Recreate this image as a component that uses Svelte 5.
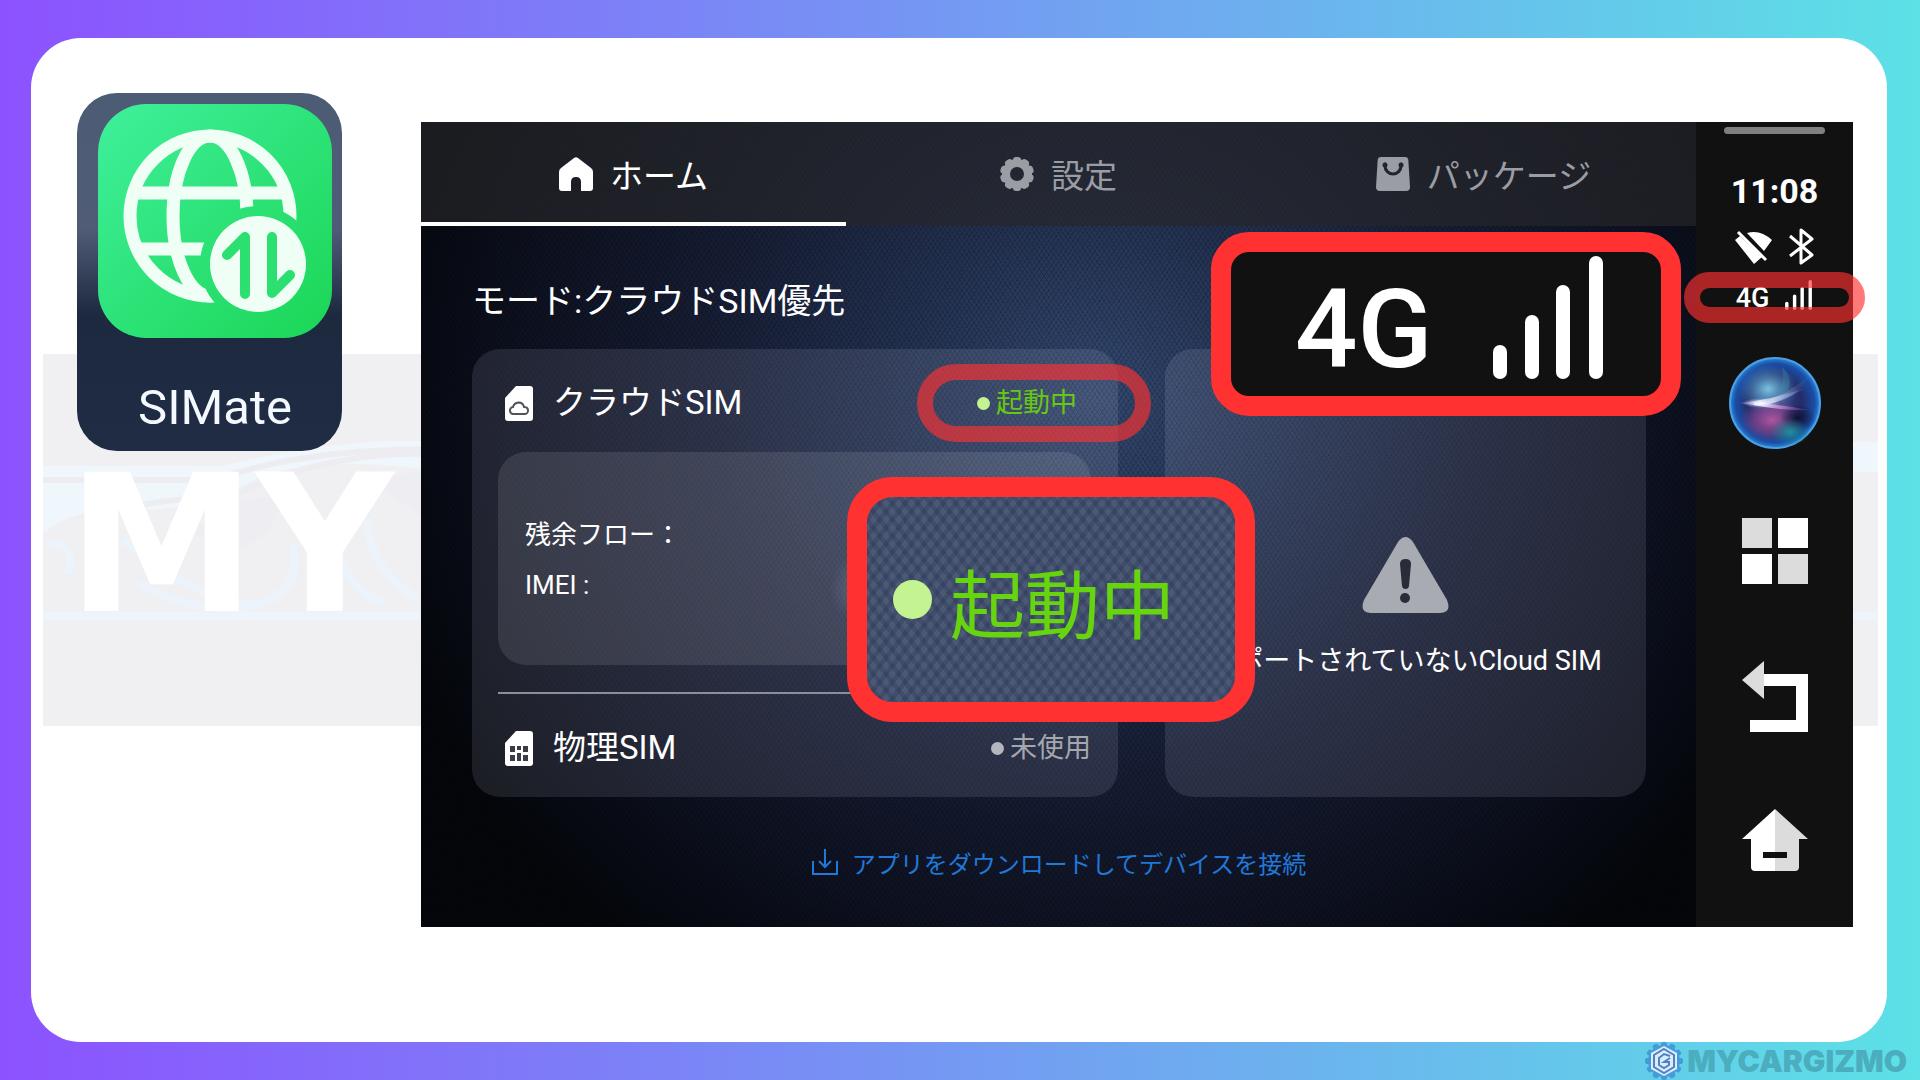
<script lang="ts">
  type Tab = 'home' | 'settings' | 'packages';

  const tabs: { id: Tab; label: string }[] = [
    { id: 'home', label: 'ホーム' },
    { id: 'settings', label: '設定' },
    { id: 'packages', label: 'パッケージ' }
  ];

  const teeth = Array.from({ length: 12 }, (_, i) => i * 30);
  const cogTeeth = Array.from({ length: 10 }, (_, i) => i * 36);

  let active = $state<Tab>('home');
</script>

{#snippet signal()}
  <svg class="signal" viewBox="0 0 112 123" fill="#fff" aria-hidden="true">
    <rect x="1" y="89" width="14" height="34" rx="7" />
    <rect x="33" y="59" width="14" height="64" rx="7" />
    <rect x="64" y="29" width="14" height="94" rx="7" />
    <rect x="97" y="0" width="14" height="123" rx="7" />
  </svg>
{/snippet}

<div class="page">
  <main class="card">
    <div class="watermark" aria-hidden="true">
      <svg viewBox="0 0 1835 372" preserveAspectRatio="none" fill="none">
        <path d="M0 112h180q120-30 220-24h1435v30H400Q260 96 200 132q-60 30-130 22Q20 160 0 180z" fill="#eff7fc" />
        <path d="M0 126h170q100-34 240-30M60 160q90-24 140-10M195 140q90-44 200-40" stroke="#ededf1" stroke-width="6" />
        <path d="M80 185q70 60 130 66q50-10 40-60M95 230q60 30 110 24M300 160q-20 60 40 90M325 165q0 50 50 80M5 190q30 0 20 30" stroke="#edf3fb" stroke-width="8" />
        <path d="M150 180q40-46 90-34q-10 40-50 50zM330 130q30-16 60-10v50z" fill="#eeeef2" />
        <path d="M0 262h1835" stroke="#eef4fb" stroke-width="8" />
      </svg>
      <span class="watermark-text">MY</span>
    </div>

    <button class="app-tile" type="button">
      <svg class="app-icon" viewBox="0 0 234 234" fill="none" aria-hidden="true">
        <defs>
          <linearGradient id="app-green" x1="0" y1="0" x2="1" y2="1">
            <stop offset="0" stop-color="#3ff09c" />
            <stop offset="1" stop-color="#1bd655" />
          </linearGradient>
          <mask id="globe-cut">
            <rect width="234" height="234" fill="#fff" />
            <circle cx="160" cy="160" r="58" fill="#000" />
          </mask>
        </defs>
        <rect width="234" height="234" rx="48" fill="url(#app-green)" />
        <g mask="url(#globe-cut)" stroke="#f0fff5" stroke-width="13">
          <circle cx="112" cy="112" r="80" />
          <ellipse cx="112" cy="112" rx="37" ry="80" />
          <path d="M36 89h152M36 145h152" />
        </g>
        <circle cx="160" cy="160" r="48" fill="#f0fff5" />
        <path d="M129 151l18-18v57M192 171l-18 18v-56" stroke="#2be070" stroke-width="10" stroke-linecap="round" stroke-linejoin="round" />
      </svg>
      <span class="app-name">SIMate</span>
    </button>

    <section class="device">
      <div class="screen">
        <nav class="tabs">
          {#each tabs as tab (tab.id)}
            <button class="tab" class:tab--active={active === tab.id} type="button" onclick={() => (active = tab.id)}>
              <svg class="tab-icon" viewBox="0 0 34 34" fill="currentColor" aria-hidden="true">
                {#if tab.id === 'home'}
                  <path d="M15 1q2-1.500 4 0l13 10q2 1.500 2 4v16q0 3-3 3h-9V25q0-5-5-5t-5 5v9H3q-3 0-3-3V15q0-2.500 2-4z" />
                {:else if tab.id === 'settings'}
                  <path fill-rule="evenodd" d="M17 2a15 15 0 1 0 0 30a15 15 0 1 0 0-30zM17 10a7 7 0 1 1 0 14a7 7 0 1 1 0-14z" />
                  {#each cogTeeth as angle (angle)}
                    <rect x="13" y="0" width="8" height="6" rx="3" transform="rotate({angle} 17 17)" />
                  {/each}
                {:else}
                  <path d="M5 0h24q3 0 3.300 3L34 30q0 4-4 4H4q-4 0-4-4L1.700 3Q2 0 5 0z" />
                  <path d="M9 7v2a8 8 0 0 0 16 0V7" fill="none" stroke="#22252d" stroke-width="3" stroke-linecap="round" />
                  <circle cx="9" cy="8" r="2.500" fill="#22252d" />
                  <circle cx="25" cy="8" r="2.500" fill="#22252d" />
                {/if}
              </svg>
              {tab.label}
            </button>
          {/each}
        </nav>

        <div class="content">
          <h1 class="mode">モード:クラウドSIM優先</h1>

          <div class="panels">
            <section class="panel sims">
              <div class="sim-row sim-row--cloud">
                <svg class="sim-icon" viewBox="0 0 28 35" aria-hidden="true">
                  <path d="M11 0h14q3 0 3 3v29q0 3-3 3H3q-3 0-3-3V12z" fill="#fff" />
                  <path d="M9 28a3.500 3.500 0 0 1-1-7q1-4 5.500-4.500q4.500 0 5.500 4.500a3.500 3.500 0 0 1 1 7z" fill="none" stroke="#50535b" stroke-width="2" />
                </svg>
                <span class="sim-name">クラウドSIM</span>
                <span class="status status--on">
                  <i class="dot"></i>起動中
                  <span class="ring ring--status"></span>
                </span>
              </div>

              <div class="details">
                <p>残余フロー：</p>
                <p>IMEI :</p>
              </div>

              <hr />

              <div class="sim-row">
                <svg class="sim-icon" viewBox="0 0 28 35" aria-hidden="true">
                  <path d="M11 0h14q3 0 3 3v29q0 3-3 3H3q-3 0-3-3V12z" fill="#fff" />
                  <path d="M5 15h5v6H5zM12 15h4v4h-4zM18 15h5v6h-5zM5 24h5v6H5zM12 22h4v8h-4zM18 24h5v6h-5z" fill="#3a3d46" />
                </svg>
                <span class="sim-name">物理SIM</span>
                <span class="status"><i class="dot"></i>未使用</span>
              </div>
            </section>

            <section class="panel unsupported">
              <svg class="warning" viewBox="0 0 87 76" aria-hidden="true">
                <path d="M36 5q7.500-10 15 0l34 58q5 13-7 13H9Q-3 76 2 63z" fill="#a9abb2" />
                <path d="M38 27q0-5 5.500-5t5.500 5l-2 22q-.5 3-3.500 3t-3.500-3z" fill="#292d39" />
                <circle cx="43" cy="61" r="5" fill="#292d39" />
              </svg>
              <p>サポートされていないCloud SIM</p>
            </section>
          </div>

          <a class="download" href="#download">
            <svg viewBox="0 0 26 26" fill="none" stroke="currentColor" stroke-width="2" aria-hidden="true">
              <path d="M1 12v13h24V12M13 0v18M7 12l6 6l6-6" />
            </svg>
            アプリをダウンロードしてデバイスを接続
          </a>
        </div>
      </div>

      <aside class="sidebar">
        <span class="handle"></span>
        <time class="clock">11:08</time>
        <div class="radios">
          <svg width="37" height="36" viewBox="0 0 37 36" fill="#fff" aria-hidden="true">
            <path d="M12 4Q25 0 37 11L29 22z" />
            <path d="M0 11L5 7L27 28L19 35z" />
            <path d="M3 3L31 31" stroke="#fff" stroke-width="3" />
          </svg>
          <svg width="25" height="37" viewBox="0 0 25 37" fill="none" stroke="#fff" stroke-width="3" stroke-linejoin="round" aria-hidden="true">
            <path d="M1 8L23 27L12 35V2L23 11L1 28" />
          </svg>
        </div>
        <div class="network">
          4G
          {@render signal()}
          <span class="ring ring--network"></span>
        </div>

        <button class="key key--assistant" type="button" aria-label="Assistant">
          <svg width="94" height="94" viewBox="0 0 94 94" aria-hidden="true">
            <defs>
              <radialGradient id="orb">
                <stop offset="0" stop-color="#3c4488" />
                <stop offset=".6" stop-color="#232c68" />
                <stop offset=".88" stop-color="#1a4ea6" />
                <stop offset="1" stop-color="#2a86dc" />
              </radialGradient>
              <radialGradient id="orb-cyan">
                <stop offset="0" stop-color="#7ecbe4" stop-opacity=".95" />
                <stop offset="1" stop-color="#4a9cd0" stop-opacity="0" />
              </radialGradient>
              <radialGradient id="orb-pink">
                <stop offset="0" stop-color="#b0559f" />
                <stop offset=".6" stop-color="#8c4790" stop-opacity=".6" />
                <stop offset="1" stop-color="#704090" stop-opacity="0" />
              </radialGradient>
              <radialGradient id="orb-teal">
                <stop offset="0" stop-color="#1f8ea0" />
                <stop offset="1" stop-color="#168080" stop-opacity="0" />
              </radialGradient>
              <radialGradient id="orb-dark">
                <stop offset="0" stop-color="#0c1238" />
                <stop offset="1" stop-color="#0c1238" stop-opacity="0" />
              </radialGradient>
              <radialGradient id="orb-glow">
                <stop offset="0" stop-color="#fff" />
                <stop offset="1" stop-color="#c8d4ff" stop-opacity="0" />
              </radialGradient>
              <linearGradient id="orb-beam">
                <stop offset="0" stop-color="#c060c0" stop-opacity=".2" />
                <stop offset=".3" stop-color="#fff" />
                <stop offset="1" stop-color="#88a0f0" stop-opacity=".05" />
              </linearGradient>
              <linearGradient id="orb-magenta">
                <stop offset="0" stop-color="#fff" />
                <stop offset="1" stop-color="#b84ad0" stop-opacity=".1" />
              </linearGradient>
            </defs>
            <circle cx="47" cy="47" r="45" fill="url(#orb)" stroke="#4aa0e4" stroke-width="2" />
            <ellipse cx="40" cy="33" rx="30" ry="25" fill="url(#orb-cyan)" />
            <ellipse cx="44" cy="64" rx="32" ry="22" fill="url(#orb-pink)" />
            <ellipse cx="70" cy="62" rx="18" ry="14" fill="url(#orb-dark)" />
            <ellipse cx="62" cy="76" rx="20" ry="14" fill="url(#orb-teal)" />
            <path d="M54 11q4 18-6 30l12-6q6-14-6-24z" fill="#3c9fa8" opacity=".3" />
            <path d="M10 47Q44 44 80 31Q58 44 34 50z" fill="url(#orb-beam)" opacity=".8" />
            <path d="M28 46Q58 42 82 18Q70 46 32 49z" fill="url(#orb-beam)" opacity=".35" />
            <path d="M26 47Q50 48 82 54Q54 55 26 49z" fill="url(#orb-magenta)" />
            <ellipse cx="33" cy="47" rx="19" ry="5" fill="url(#orb-glow)" />
          </svg>
        </button>
        <button class="key key--apps" type="button" aria-label="Apps">
          <svg width="66" height="66" viewBox="0 0 66 66" aria-hidden="true">
            <path d="M0 0h30v30H0zM36 36h30v30H36z" fill="#dcdcdc" />
            <path d="M36 0h30v30H36zM0 36h30v30H0z" fill="#fff" />
          </svg>
        </button>
        <button class="key key--back" type="button" aria-label="Back">
          <svg width="66" height="71" viewBox="0 0 66 71" aria-hidden="true">
            <path d="M22 13h44v58H8V59h46V25H22z" fill="#fff" />
            <path d="M0 19L22 0v38z" fill="#dcdcdc" />
          </svg>
        </button>
        <button class="key key--launcher" type="button" aria-label="Home">
          <svg width="66" height="62" viewBox="0 0 66 62" aria-hidden="true">
            <path d="M33 0L0 30h9v28q0 4 4 4h20z" fill="#fff" />
            <path d="M33 0l33 30h-9v28q0 4-4 4H33z" fill="#dcdcdc" />
            <path d="M21 43h24v6H21z" fill="#111" />
          </svg>
        </button>
      </aside>

      <div class="callout callout--status"><i class="dot"></i><span>起動中</span></div>
      <div class="callout callout--network">4G {@render signal()}</div>
    </section>
  </main>

  <footer class="brand">
    <svg width="38" height="38" viewBox="0 0 38 38" aria-hidden="true">
      <g fill="#439bd8">
        <circle cx="19" cy="19" r="16" />
        {#each teeth as angle (angle)}
          <rect x="16" y="0" width="6" height="7" rx="2" transform="rotate({angle} 19 19)" />
        {/each}
      </g>
      <path d="M19 4l13 7v16l-13 7l-13-7V11z" fill="#d8edff" />
      <path d="M19 7l10 6v12l-10 6l-10-6V13z" fill="none" stroke="#5580bd" stroke-width="2" />
      <path d="M25 14l-6-2l-5 4v7l5 3l5-3v-3h-5l6-4" fill="none" stroke="#5580bd" stroke-width="2" />
    </svg>
    <span>MYCARGIZMO</span>
  </footer>
</div>

<style>
  :global(body) {
    margin: 0;
  }

  .page {
    --red: #ff3131;
    --ring: rgba(255, 49, 49, 0.65);
    --dark: #111;
    display: flex;
    flex-direction: column;
    box-sizing: border-box;
    min-height: 100vh;
    padding: 38px 33px 0 31px;
    background: linear-gradient(90deg, #8c52ff, #5ce1e6);
    font-family: Roboto, 'Noto Sans CJK JP', sans-serif;
    color: #fff;
  }

  button {
    border: 0;
    padding: 0;
    background: none;
    color: inherit;
    font: inherit;
    cursor: pointer;
  }

  svg {
    display: block;
    flex: none;
  }

  p,
  h1,
  hr {
    margin: 0;
  }

  .card {
    position: relative;
    flex: 1;
    display: flex;
    align-items: flex-start;
    gap: 79px;
    padding: 55px 34px 55px 46px;
    border-radius: 50px;
    background: #fff;
  }

  .watermark {
    position: absolute;
    top: 316px;
    left: 12px;
    right: 9px;
    height: 372px;
    background: #f0f0f2;
    overflow: hidden;
  }

  .watermark svg {
    width: 100%;
    height: 100%;
  }

  .watermark-text {
    position: absolute;
    top: 92px;
    left: 24px;
    color: #fff;
    font: 700 190px/200px 'DejaVu Sans', sans-serif;
  }

  /* App shortcut */
  .app-tile {
    position: relative;
    display: flex;
    flex-direction: column;
    align-items: center;
    gap: 40px;
    padding: 11px 10px 13px 21px;
    border-radius: 40px;
    background: linear-gradient(#4c5c74, #505c76 38%, #1c293f 62%, #1f2c43);
  }

  .app-icon {
    width: 234px;
    height: 234px;
  }

  .app-name {
    font-size: 49px;
    line-height: 60px;
    color: #f4f8ff;
  }

  /* Head unit */
  .device {
    position: relative;
    flex: 1;
    display: flex;
    margin-top: 29px;
  }

  .screen {
    flex: 1;
    background:
      repeating-linear-gradient(56deg, rgba(0, 0, 0, 0.16) 0 1px, transparent 1px 4px),
      repeating-linear-gradient(-56deg, rgba(0, 0, 0, 0.16) 0 1px, transparent 1px 4px),
      radial-gradient(ellipse 58% 88% at 53% 34%, #33486f, #22304f 28%, #171e35 52%, #0d1120 78%, #04060b);
  }

  .tabs {
    display: flex;
    background: rgba(38, 39, 41, 0.68);
  }

  .tab {
    flex: 1;
    display: flex;
    align-items: center;
    justify-content: center;
    gap: 17px;
    height: 104px;
    box-sizing: border-box;
    border-top: 4px solid transparent;
    border-bottom: 4px solid transparent;
    font-size: 33px;
    color: #9b9da4;
  }

  .tab--active {
    border-bottom-color: #fff;
    color: #fff;
  }

  .tab-icon {
    width: 34px;
    height: 34px;
  }

  .content {
    padding: 51px 50px 0 51px;
  }

  .mode {
    margin-bottom: 24px;
    font-size: 34px;
    font-weight: 400;
    line-height: 48px;
  }

  .panels {
    display: grid;
    grid-template-columns: 646fr 481fr;
    gap: 47px;
  }

  .panel {
    border-radius: 28px;
    background: rgba(225, 230, 255, 0.11);
  }

  .sims {
    padding: 0 27px 0 26px;
  }

  .sim-row {
    display: flex;
    align-items: center;
    gap: 20px;
    box-sizing: border-box;
    height: 103px;
    padding: 5px 0 0 7px;
  }

  .sim-row--cloud {
    padding-right: 14px;
  }

  .sim-icon {
    width: 28px;
    height: 35px;
  }

  .sim-name {
    flex: 1;
    font-size: 33px;
    line-height: 48px;
  }

  .status {
    position: relative;
    display: flex;
    align-items: center;
    gap: 6px;
    font-size: 27px;
    line-height: 40px;
    color: #a5a7ae;
  }

  .status--on {
    color: #66c813;
  }

  .dot {
    width: 13px;
    height: 13px;
    border-radius: 50%;
    background: #b4b6bd;
  }

  .status--on .dot,
  .callout .dot {
    background: #c4f491;
  }

  .ring {
    position: absolute;
    border: 16px solid var(--ring);
    border-radius: 40px;
  }

  .ring--status {
    inset: -19px -74px -19px -60px;
  }

  .details {
    display: flex;
    flex-direction: column;
    justify-content: center;
    box-sizing: border-box;
    height: 213px;
    padding: 3px 0 0 27px;
    border-radius: 28px;
    background:
      radial-gradient(circle at 370px 136px, rgba(255, 255, 255, 0.2), transparent 38px),
      rgba(255, 255, 255, 0.1);
    font-size: 26px;
    line-height: 50px;
  }

  hr {
    height: 2px;
    margin-top: 27px;
    border: 0;
    background: #8b8e9b;
  }

  .unsupported {
    display: flex;
    flex-direction: column;
    align-items: center;
    justify-content: center;
    gap: 28px;
    padding-top: 71px;
    font-size: 27px;
    line-height: 40px;
    white-space: nowrap;
  }

  .warning {
    width: 87px;
    height: 76px;
  }

  .download {
    display: flex;
    align-items: center;
    justify-content: center;
    gap: 14px;
    height: 130px;
    color: #2078d8;
    font-size: 24px;
    text-decoration: none;
  }

  .download svg {
    width: 26px;
    height: 26px;
  }

  /* System bar */
  .sidebar {
    display: flex;
    flex-direction: column;
    align-items: center;
    box-sizing: border-box;
    width: 157px;
    padding-top: 5px;
    background: var(--dark);
  }

  .handle {
    width: 101px;
    height: 7px;
    border-radius: 4px;
    background: #808080;
  }

  .clock {
    margin-top: 37px;
    font-size: 34px;
    font-weight: 700;
    line-height: 40px;
  }

  .radios {
    display: flex;
    align-items: center;
    gap: 17px;
    margin-top: 17px;
  }

  .network {
    position: relative;
    display: flex;
    align-items: center;
    gap: 15px;
    margin-top: 18px;
    font-size: 27px;
    font-weight: 500;
    line-height: 30px;
  }

  .network .signal {
    width: 29px;
    height: 30px;
    margin-top: -6px;
  }

  .ring--network {
    inset: -11px -52px -10px;
  }

  .key--assistant {
    margin-top: 43px;
  }

  .key--apps {
    margin-top: 68px;
  }

  .key--back,
  .key--launcher {
    margin-top: 77px;
  }

  /* Enlarged details over the screen */
  .callout {
    position: absolute;
    display: flex;
    align-items: center;
    box-sizing: border-box;
    border: 20px solid var(--red);
  }

  .callout--status {
    top: 355px;
    left: 426px;
    width: 408px;
    height: 245px;
    gap: 18px;
    padding-left: 26px;
    border-radius: 46px;
    background:
      repeating-linear-gradient(52deg, rgba(24, 34, 70, 0.22) 0 4px, transparent 5px 10px),
      repeating-linear-gradient(-52deg, rgba(24, 34, 70, 0.22) 0 4px, transparent 5px 10px),
      #4b5975;
    color: #66d40f;
    font-size: 75px;
    line-height: 100px;
  }

  .callout--status span {
    padding-top: 14px;
  }

  .callout--status .dot {
    width: 39px;
    height: 39px;
  }

  .callout--network {
    top: 110px;
    right: 172px;
    width: 470px;
    height: 184px;
    gap: 60px;
    padding: 10px 0 0 64px;
    border-radius: 38px;
    background: var(--dark);
    font-size: 110px;
    font-weight: 500;
  }

  .callout--network .signal {
    width: 112px;
    height: 123px;
    margin-top: -24px;
  }

  .brand {
    display: flex;
    align-items: center;
    justify-content: flex-end;
    gap: 4px;
    height: 38px;
    margin-right: -20px;
    color: #4badbd;
    font: 900 30px/38px Inter, sans-serif;
  }
</style>
